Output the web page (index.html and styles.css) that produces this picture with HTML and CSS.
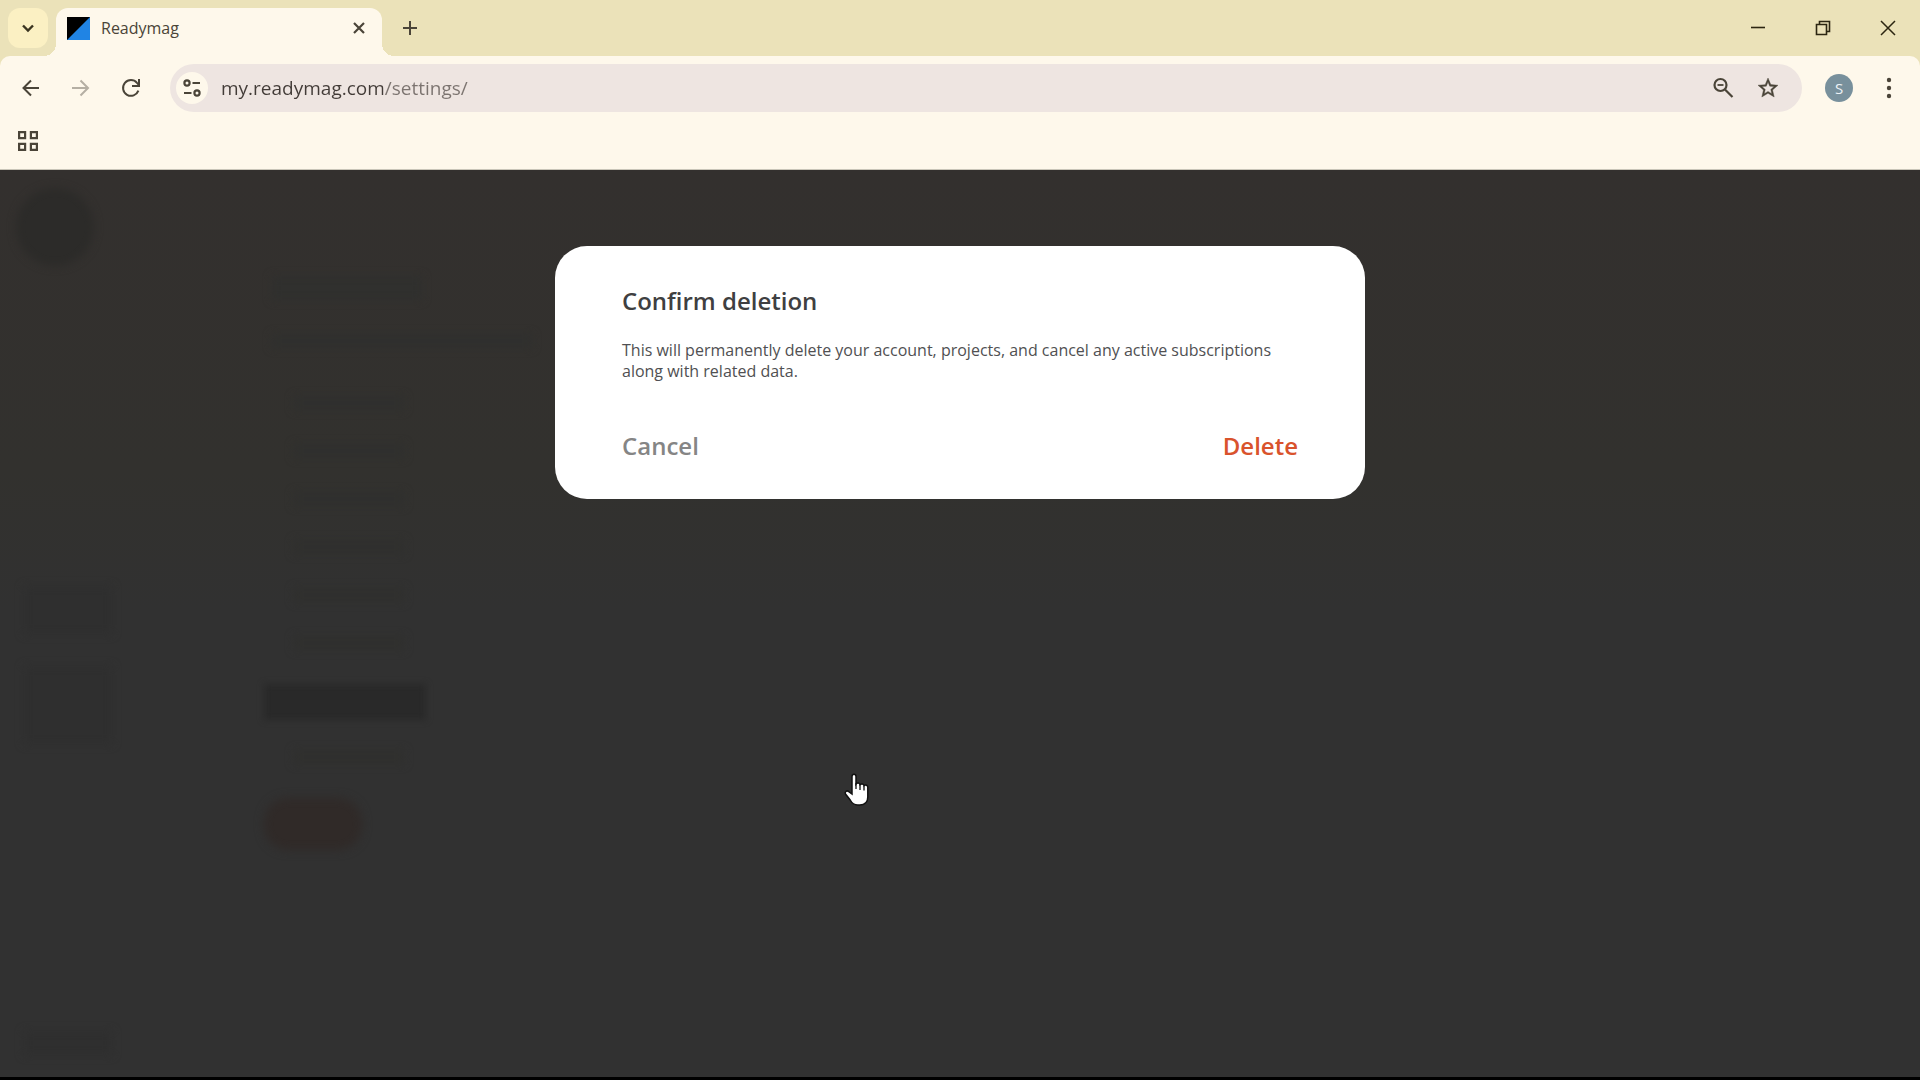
FILE: index.html
```html
<!DOCTYPE html>
<html lang="en">
<head>
    <meta charset="UTF-8">
    <meta name="viewport" content="width=device-width, initial-scale=1.0">
    <title>Readymag</title>
    <link rel="stylesheet" href="styles.css">
</head>
<body>
<header class="browser">
    <div class="tab-strip">
        <button class="tab-search" aria-label="Search tabs">
            <svg width="14" height="14" viewBox="0 0 14 14"><path d="M2 4.5l5 5 5-5" fill="none" stroke="currentColor" stroke-width="2.4"/></svg>
        </button>
        <div class="tab">
            <svg class="favicon" width="23" height="23" viewBox="0 0 23 23"><path d="M0 0h23v23H0z" fill="#2084e4"/><path d="M0 0h23L0 23z" fill="#000"/></svg>
            <span class="tab-title">Readymag</span>
            <button class="tab-close" aria-label="Close tab">
                <svg width="14" height="14" viewBox="0 0 14 14"><path d="M2 2l10 10M12 2L2 12" stroke="currentColor" stroke-width="2.2"/></svg>
            </button>
        </div>
        <button class="new-tab" aria-label="New tab">
            <svg width="16" height="16" viewBox="0 0 16 16"><path d="M8 1v14M1 8h14" stroke="currentColor" stroke-width="2"/></svg>
        </button>
        <div class="window-buttons">
            <button aria-label="Minimize"><svg width="16" height="16" viewBox="0 0 16 16"><path d="M1 7.5h14" stroke="currentColor" stroke-width="1.6"/></svg></button>
            <button aria-label="Restore"><svg width="16" height="16" viewBox="0 0 16 16"><path d="M1.5 4.5h10v10h-10zM4.5 4.5v-3h10v10h-3" fill="none" stroke="currentColor" stroke-width="1.6"/></svg></button>
            <button aria-label="Close"><svg width="16" height="16" viewBox="0 0 16 16"><path d="M1 1l14 14M15 1L1 15" stroke="currentColor" stroke-width="1.5"/></svg></button>
        </div>
    </div>
    <div class="toolbar">
        <button class="nav" aria-label="Back">
            <svg width="20" height="20" viewBox="0 0 20 20"><path d="M18 10H3M10 2.500L2.500 10l7.500 7.500" fill="none" stroke="currentColor" stroke-width="2"/></svg>
        </button>
        <button class="nav" aria-label="Forward" disabled>
            <svg width="20" height="20" viewBox="0 0 20 20"><path d="M1 10h16M9.500 2.500L17 10l-7.500 7.500" fill="none" stroke="currentColor" stroke-width="2"/></svg>
        </button>
        <button class="nav" aria-label="Reload">
            <svg width="20" height="20" viewBox="0 0 20 20"><path d="M17.400 12.600A7.900 7.900 0 1 1 16 4.800l2 2.200" fill="none" stroke="currentColor" stroke-width="2"/><path d="M18 1v7h-7" fill="none" stroke="currentColor" stroke-width="2"/></svg>
        </button>
        <div class="address-bar">
            <button class="site-info" aria-label="View site information">
                <svg width="20" height="20" viewBox="0 0 20 20" fill="none" stroke="currentColor" stroke-width="2.200"><circle cx="5" cy="5" r="2.600"/><path d="M10.500 5H18M2 15h7.500"/><circle cx="15" cy="15" r="2.600"/></svg>
            </button>
            <input class="url" type="text" value="my.readymag.com/settings/" aria-label="Address" spellcheck="false">
            <button class="bar-icon" aria-label="Zoom">
                <svg width="22" height="22" viewBox="0 0 22 22" fill="none" stroke="currentColor" stroke-width="2.200"><circle cx="8.500" cy="8" r="6"/><path d="M13 12.500l7.500 7.500"/><path d="M5.500 8h6" stroke-width="1.800"/></svg>
            </button>
            <button class="bar-icon" aria-label="Bookmark this tab">
                <svg width="24" height="24" viewBox="0 0 24 24"><path fill="currentColor" d="M22 9.240l-7.190-.62L12 2 9.190 8.630 2 9.240l5.460 4.730L5.820 21 12 17.270 18.180 21l-1.630-7.030L22 9.240zM12 15.400l-3.760 2.270 1-4.280-3.320-2.880 4.380-.38L12 6.100l1.710 4.040 4.380.38-3.320 2.880 1 4.280L12 15.400z" stroke="currentColor" stroke-width=".4"/></svg>
            </button>
        </div>
        <button class="avatar" aria-label="Profile">S</button>
        <button class="menu" aria-label="Menu">
            <svg width="6" height="22" viewBox="0 0 6 22" fill="currentColor"><circle cx="3" cy="3" r="2.200"/><circle cx="3" cy="11" r="2.200"/><circle cx="3" cy="19" r="2.200"/></svg>
        </button>
    </div>
    <div class="bookmarks">
        <button class="apps" aria-label="Apps">
            <svg width="20" height="20" viewBox="0 0 20 20" fill="none" stroke="currentColor" stroke-width="2.200"><path d="M1.100 1.100h6v6h-6zM12.900 1.100h6v6h-6zM1.100 12.900h6v6h-6zM12.900 12.900h6v6h-6z"/></svg>
        </button>
    </div>
</header>

<main class="page">
    <!-- Settings page, blurred behind the dialog -->
    <div class="settings" aria-hidden="true">
        <div class="sidebar">
            <div class="logo"></div>
            <div class="side-links"></div>
            <div class="side-links tall"></div>
            <div class="side-footer"></div>
        </div>
        <div class="form">
            <div class="line title"></div>
            <div class="line wide"></div>
            <div class="line"></div>
            <div class="line"></div>
            <div class="line"></div>
            <div class="line"></div>
            <div class="line"></div>
            <div class="line"></div>
            <div class="save"></div>
            <div class="line"></div>
            <div class="remove"></div>
        </div>
    </div>

    <div class="dialog" role="dialog" aria-labelledby="dialog-title">
        <h2 class="dialog-title" id="dialog-title">Confirm deletion</h2>
        <p class="dialog-text">This will permanently delete your account, projects, and cancel any active subscriptions along with related data.</p>
        <div class="dialog-buttons">
            <button class="cancel">Cancel</button>
            <button class="delete">Delete</button>
        </div>
    </div>

    <svg class="cursor" width="28" height="36" viewBox="0 0 28 36"><path d="M9 4.500c0-3 4-3 4 0V12c1-1.500 3.600-1.200 4 .6 1.200-1.200 3.600-.8 4 1 1.500-1 3.800-.4 3.800 1.600V25c0 5-3.300 8-8 8h-2c-4 0-6-2-7.600-5L2.500 22c-1.200-2.500 1.500-4 3.300-2.400L9 22z" fill="#fff" stroke="#111" stroke-width="1.500"/><path d="M13 11v6M17 12.500V18M21 14v4.500" stroke="#111" stroke-width="1.300"/></svg>
</main>
</body>
</html>
```
FILE: styles.css
```css
* {
    box-sizing: border-box;
}
body {
    margin: 0;
    min-height: 100vh;
    display: flex;
    flex-direction: column;
    font-family: "Open Sans", "Noto Sans", sans-serif;
    background: #000;
}
button {
    display: flex;
    align-items: center;
    justify-content: center;
    flex-shrink: 0;
    padding: 0;
    border: none;
    background: none;
    color: inherit;
    font-family: inherit;
    cursor: pointer;
}

/* Browser window */
.browser {
    background: #ebe2b9;
    color: #4a4438;
}
.tab-strip {
    display: flex;
    align-items: flex-end;
    height: 56px;
    padding-left: 8px;
}
.tab-search {
    width: 40px;
    height: 40px;
    margin: 0 8px 8px 0;
    border-radius: 12px;
    background: #fbf0c3;
    color: #3a3420;
}
.tab {
    position: relative;
    display: flex;
    align-items: center;
    width: 326px;
    height: 48px;
    padding: 0 12px 8px 11px;
    border-radius: 12px 12px 0 0;
    background: #fef8eb;
}
/* Curved feet of the active tab */
.tab::before,
.tab::after {
    content: "";
    position: absolute;
    bottom: 0;
    width: 12px;
    height: 12px;
}
.tab::before {
    left: -12px;
    background: radial-gradient(circle at 0 0, transparent 12px, #fef8eb 12px);
}
.tab::after {
    right: -12px;
    background: radial-gradient(circle at 100% 0, transparent 12px, #fef8eb 12px);
}
.tab-title {
    flex: 1;
    margin-left: 11px;
    font-size: 16px;
}
.tab-close {
    width: 22px;
    height: 22px;
}
.new-tab {
    width: 40px;
    height: 40px;
    margin: 0 0 8px 8px;
}
.window-buttons {
    display: flex;
    height: 56px;
    margin-left: auto;
    color: #2c2611;
}
.window-buttons button {
    width: 65px;
}
.toolbar {
    display: flex;
    align-items: center;
    height: 64px;
    padding: 0 15px 0 6px;
    border-radius: 10px 10px 0 0;
    background: #fef8eb;
}
.nav {
    width: 50px;
    height: 40px;
}
.nav:disabled {
    color: #b5afa3;
}
.address-bar {
    display: flex;
    align-items: center;
    flex: 1;
    height: 48px;
    margin-left: 14px;
    padding: 0 12px 0 6px;
    border-radius: 24px;
    background: #eee5e1;
}
.site-info {
    width: 32px;
    height: 32px;
    border-radius: 50%;
    background: #fef8eb;
}
.url {
    flex: 1;
    min-width: 0;
    height: 40px;
    margin-left: 13px;
    padding: 0;
    border: none;
    outline: none;
    /* the path is lighter than the host */
    background: linear-gradient(to right, #423b37 162px, #7b736f 162px);
    -webkit-background-clip: text;
    background-clip: text;
    color: transparent;
    caret-color: #423b37;
    font-family: inherit;
    font-size: 19px;
}
.bar-icon {
    width: 45px;
    height: 40px;
}
.avatar {
    width: 28px;
    height: 28px;
    margin-left: 23px;
    border-radius: 50%;
    background: #78909c;
    color: #eef3f6;
    font-size: 15px;
}
.menu {
    width: 32px;
    height: 40px;
    margin-left: 20px;
}
.bookmarks {
    display: flex;
    align-items: center;
    height: 50px;
    padding: 0 0 8px 12px;
    border-bottom: 1px solid #c9c5b8;
    background: #fef8eb;
}
.apps {
    width: 32px;
    height: 32px;
}

/* Page under the overlay */
.page {
    position: relative;
    flex: 1;
    margin-bottom: 3px;
    background: linear-gradient(#33302e, #32312e 300px, #313131 440px);
}
.settings {
    position: absolute;
    inset: 0;
    display: flex;
    overflow: hidden;
}
.sidebar {
    display: flex;
    flex-direction: column;
    width: 264px;
    padding: 18px 16px 22px;
}
.logo {
    width: 78px;
    height: 78px;
    margin-bottom: 320px;
    border-radius: 50%;
    background: #2c2b29;
    filter: blur(4px);
}
.side-links,
.side-footer {
    width: 88px;
    height: 48px;
    margin: 0 8px 32px;
    background: #2f2f2f;
    filter: blur(4px);
}
.side-links.tall {
    height: 78px;
}
.side-footer {
    height: 24px;
    margin: auto 8px 0;
}
.form {
    padding-top: 106px;
}
.line {
    width: 110px;
    height: 14px;
    margin: 0 0 34px 30px;
    background: #30302e;
    filter: blur(4px);
}
.line.title {
    width: 150px;
    height: 24px;
    margin-left: 8px;
}
.line.wide {
    width: 260px;
    margin-left: 8px;
    margin-bottom: 48px;
}
.save {
    width: 162px;
    height: 36px;
    margin-bottom: 30px;
    background: #292929;
    filter: blur(3px);
}
.remove {
    width: 98px;
    height: 52px;
    border-radius: 24px;
    background: #302a28;
    filter: blur(5px);
}

/* Confirm dialog */
.dialog {
    position: relative;
    max-width: 810px;
    margin: 76px auto 0;
    padding: 37px 67px 35px;
    border-radius: 32px;
    background: #fff;
    color: #3f3f41;
}
.dialog-title {
    margin: 0 0 21px;
    font-size: 24px;
    font-weight: 600;
    line-height: 36px;
}
.dialog-text {
    margin: 0 0 46px;
    color: #505052;
    font-size: 16px;
    line-height: 21px;
}
.dialog-buttons {
    display: flex;
    justify-content: space-between;
}
.dialog-buttons button {
    font-size: 24px;
    font-weight: 600;
    line-height: 36px;
}
.cancel {
    color: #858585;
}
.delete {
    color: #d9532c;
}

.cursor {
    position: absolute;
    top: 602px;
    left: 843px;
}
```
